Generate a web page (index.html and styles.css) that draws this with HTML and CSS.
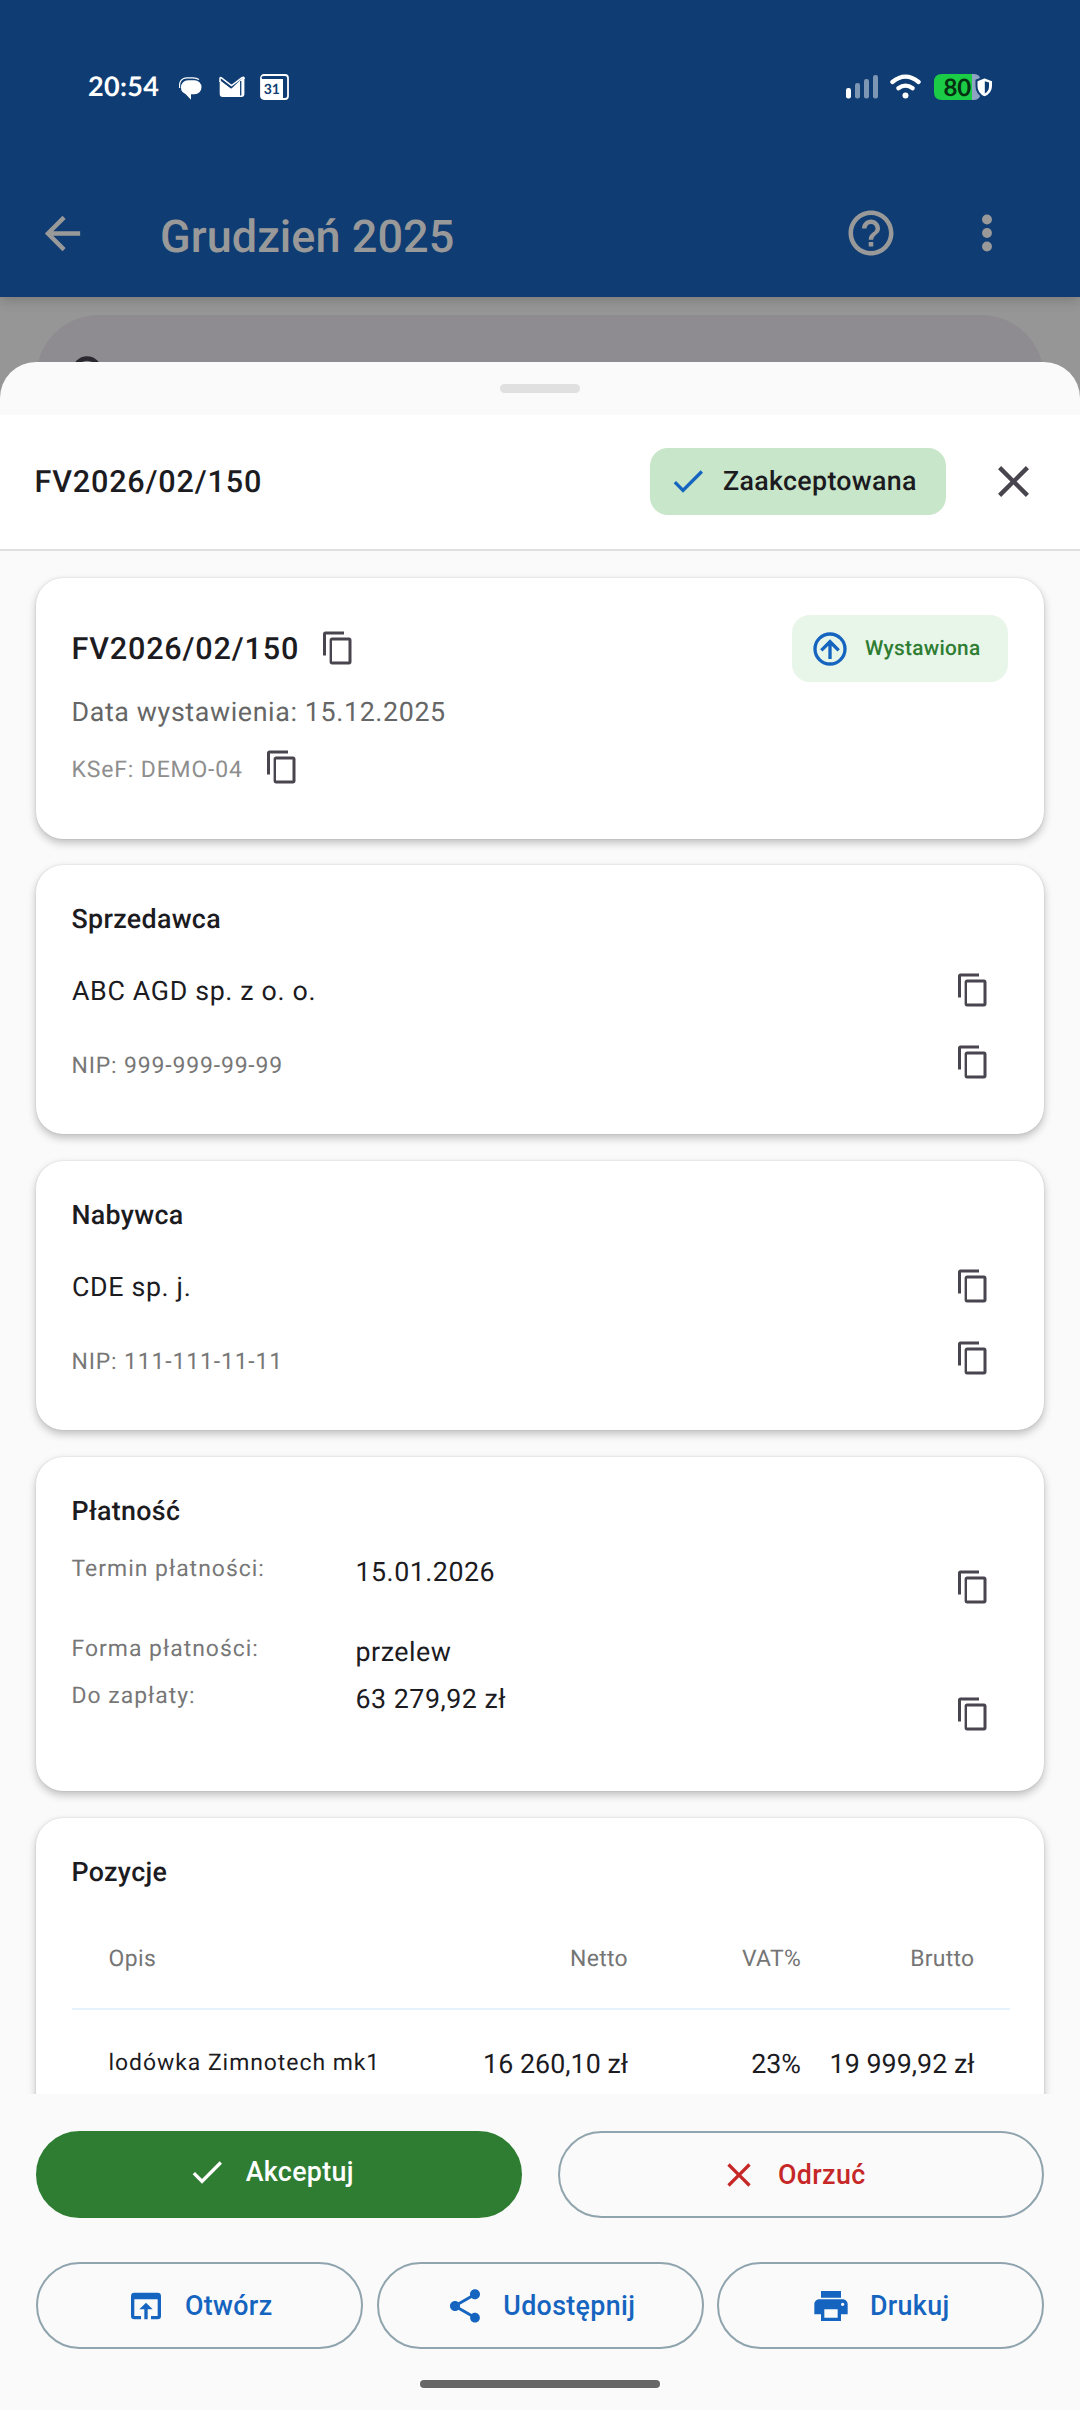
FILE: index.html
```html
<!DOCTYPE html>
<html lang="pl">
<head>
<meta charset="utf-8">
<title>FV2026/02/150</title>
<link rel="stylesheet" href="styles.css">
</head>
<body>
<svg class="defs" aria-hidden="true">
  <symbol id="copy" viewBox="0 0 24 24"><path d="M19 21H8V7h11m0-2H8c-.9 0-1.600.7-1.600 1.600v14.800c0 .9.7 1.600 1.600 1.600h11.400c.9 0 1.600-.7 1.600-1.600V6.600c0-.9-.7-1.600-1.600-1.600M16 1H3.600C2.700 1 2 1.700 2 2.600V17h2V3h12z"/></symbol>
  <symbol id="check" viewBox="0 0 24 24"><path d="M9 16.170 4.830 12l-1.420 1.410L9 19 21 7l-1.410-1.410z"/></symbol>
  <symbol id="close" viewBox="0 0 24 24"><path d="M19 6.410 17.590 5 12 10.590 6.410 5 5 6.410 10.590 12 5 17.590 6.410 19 12 13.410 17.590 19 19 17.590 13.410 12z"/></symbol>
</svg>
<div class="screen">
  <header class="top">
    <div class="status">
      <span class="clock">20:54</span>
      <svg class="ic-chat" viewBox="0 0 23 23"><path fill="#fff" d="M9 3.300h6.500a7 7 0 0 1 0 14H12V22.800L6.500 17A7 7 0 0 1 2 10.300a7 7 0 0 1 7-7z"/><path fill="none" stroke="#fff" stroke-width="1.200" d="M.7 11C-.3 4.500 3 .8 8 .8h6c2.500 0 4.500.6 6 1.700"/></svg>
      <svg class="ic-mail" viewBox="0 0 26 22"><path fill="#fff" d="M.7 4 12.500 12.500 23 2.500Q25.400.5 25.400 3.500V18q0 3-3 3H3.700q-3 0-3-3z"/><path fill="none" stroke="#fff" stroke-width="1.500" d="M1 6V2.600Q1 1 2.500 1.800L12.500 9.500 23 1.700Q25.200.5 25.200 3"/><path stroke="#0f3d73" stroke-width="1.300" d="M21.700 5v14.500M3 4.800l9.300 7.300"/></svg>
      <svg class="ic-cal" viewBox="0 0 29 26"><rect x="1" y="1" width="27" height="24" rx="3" fill="none" stroke="#fff" stroke-width="1.800"/><path fill="#fff" d="M1 5h22v20H4q-3 0-3-3z"/><path fill="none" stroke="#0f3d73" stroke-width="1.300" d="M2 4q0-1.200 1.500-1.200"/><text x="11.800" y="20.300" text-anchor="middle" class="cal-day">31</text></svg>
      <svg class="ic-signal" viewBox="0 0 32 25"><rect y="14" width="5" height="10.500" rx="2.200" fill="#fff"/><g fill="#7d96b3"><rect x="9" y="9" width="5" height="15.500" rx="2.200"/><rect x="18" y="5" width="5" height="19.500" rx="2.200"/><rect x="27" y="1" width="5" height="23.500" rx="2.200"/></g></svg>
      <svg class="ic-wifi" viewBox="0 0 31 25"><g fill="none" stroke="#fff" stroke-width="4.200" stroke-linecap="round"><path d="M2.400 8Q15.500-2.600 28.600 8"/><path d="M8.300 14.300q7.200-5.400 14.400 0"/></g><circle cx="15.500" cy="21.500" r="3" fill="#fff"/></svg>
      <svg class="ic-battery" viewBox="0 0 59 26"><path fill="#8fa3c2" d="M38 0h2q6.500 0 6.500 7v12q0 7-6.500 7h-2z"/><path fill="#1bcc46" d="M8 0h30v26H8q-8 0-8-8V8q0-8 8-8z"/><path fill="#fff" stroke="#0f3d73" stroke-width="2" d="M50.500 3.300 59 6.500v5.500q0 8-8.500 11.500-8-3.500-8-11.500V6.500z"/><path fill="#0f3d73" d="M50.800 7.300V19.500q4.200-2.500 4.200-7V8.600z"/><text x="23.300" y="21.500" text-anchor="middle" class="charge">80</text></svg>
    </div>
    <div class="appbar">
      <svg class="back" viewBox="0 0 24 24"><path d="M20 11H7.830l5.590-5.590L12 4l-8 8 8 8 1.410-1.410L7.830 13H20z"/></svg>
      <h1 class="month">Grudzień 2025</h1>
      <svg class="help" viewBox="0 0 24 24"><path d="M11 18h2v-2h-2v2zm1-16C6.480 2 2 6.480 2 12s4.480 10 10 10 10-4.480 10-10S17.520 2 12 2zm0 18c-4.410 0-8-3.590-8-8s3.590-8 8-8 8 3.590 8 8-3.590 8-8 8zm0-14c-2.210 0-4 1.790-4 4h2c0-1.100.9-2 2-2s2 .9 2 2c0 2-3 1.750-3 5h2c0-2.250 3-2.500 3-5 0-2.210-1.790-4-4-4z"/></svg>
      <svg class="more" viewBox="0 0 24 24"><circle cx="12" cy="6" r="2.200"/><circle cx="12" cy="12" r="2.200"/><circle cx="12" cy="18" r="2.200"/></svg>
    </div>
  </header>
  <div class="behind">
    <div class="search"><svg class="search-ic" viewBox="0 0 30 30"><circle cx="15" cy="15" r="12.500" fill="none" stroke="#2b2830" stroke-width="4.500"/></svg></div>
  </div>
  <section class="sheet">
    <div class="grip"><div class="handle"></div></div>
    <div class="sheet-head">
      <h2 class="invoice-no">FV2026/02/150</h2>
      <div class="chip accepted"><svg class="ic40"><use href="#check"/></svg><span>Zaakceptowana</span></div>
      <svg class="dismiss"><use href="#close"/></svg>
    </div>
    <div class="list">
      <article class="card summary">
        <div class="summary-top">
          <div class="invoice-no">FV2026/02/150</div>
          <svg class="copy"><use href="#copy"/></svg>
          <div class="chip issued"><svg class="ic40" viewBox="0 0 24 24"><path d="M13 18v-8l3.500 3.500 1.420-1.420L12 6.160l-5.920 5.920L7.500 13.500 11 10v8h2M12 2a10 10 0 0 1 10 10 10 10 0 0 1-10 10A10 10 0 0 1 2 12 10 10 0 0 1 12 2m0 2a8 8 0 0 0-8 8 8 8 0 0 0 8 8 8 8 0 0 0 8-8 8 8 0 0 0-8-8z"/></svg><span>Wystawiona</span></div>
        </div>
        <div class="date">Data wystawienia: 15.12.2025</div>
        <div class="ksef"><span class="ksef-no">KSeF: DEMO-04</span><svg class="copy"><use href="#copy"/></svg></div>
      </article>
      <article class="card party">
        <h3 class="title">Sprzedawca</h3>
        <div class="line"><span class="name">ABC AGD sp. z o. o.</span><svg class="copy"><use href="#copy"/></svg></div>
        <div class="line"><span class="nip">NIP: 999-999-99-99</span><svg class="copy"><use href="#copy"/></svg></div>
      </article>
      <article class="card party">
        <h3 class="title">Nabywca</h3>
        <div class="line"><span class="name">CDE sp. j.</span><svg class="copy"><use href="#copy"/></svg></div>
        <div class="line"><span class="nip">NIP: 111-111-11-11</span><svg class="copy"><use href="#copy"/></svg></div>
      </article>
      <article class="card payment">
        <h3 class="title">Płatność</h3>
        <div class="terms">
          <div class="term tall"><span class="label">Termin płatności:</span><span class="value">15.01.2026</span><svg class="copy"><use href="#copy"/></svg></div>
          <div class="term"><span class="label">Forma płatności:</span><span class="value">przelew</span></div>
          <div class="term tall"><span class="label">Do zapłaty:</span><span class="value">63 279,92 zł</span><svg class="copy"><use href="#copy"/></svg></div>
        </div>
      </article>
      <article class="card items">
        <h3 class="title">Pozycje</h3>
        <div class="row head"><span>Opis</span><span class="num">Netto</span><span class="num">VAT%</span><span class="num">Brutto</span></div>
        <div class="row"><span class="desc">lodówka Zimnotech mk1</span><span class="num">16 260,10 zł</span><span class="num">23%</span><span class="num">19 999,92 zł</span></div>
      </article>
    </div>
    <footer class="actions">
      <div class="decide">
        <button class="btn primary"><svg class="ic40"><use href="#check"/></svg><span>Akceptuj</span></button>
        <button class="btn reject"><svg class="ic40"><use href="#close"/></svg><span>Odrzuć</span></button>
      </div>
      <div class="tools">
        <button class="btn"><svg class="ic40" viewBox="0 0 24 24"><path d="M19 4H5a2 2 0 0 0-2 2v12a2 2 0 0 0 2 2h4v-2H5V8h14v10h-4v2h4a2 2 0 0 0 2-2V6a2 2 0 0 0-2-2zm-7 6-4 4h3v6h2v-6h3z"/></svg><span>Otwórz</span></button>
        <button class="btn"><svg class="ic40" viewBox="0 0 24 24"><path d="M18 16.080c-.76 0-1.440.3-1.960.77L8.910 12.700c.05-.23.09-.46.09-.7s-.04-.47-.09-.7l7.050-4.110c.54.5 1.250.81 2.040.81 1.660 0 3-1.340 3-3s-1.340-3-3-3-3 1.340-3 3c0 .24.04.47.09.7L8.040 9.810C7.500 9.310 6.790 9 6 9c-1.660 0-3 1.340-3 3s1.340 3 3 3c.79 0 1.500-.31 2.040-.81l7.120 4.160c-.05.21-.08.43-.08.65 0 1.610 1.310 2.920 2.920 2.920s2.920-1.310 2.920-2.920-1.310-2.920-2.920-2.920z"/></svg><span>Udostępnij</span></button>
        <button class="btn"><svg class="ic40" viewBox="0 0 24 24"><path d="M19 8H5c-1.660 0-3 1.340-3 3v6h4v4h12v-4h4v-6c0-1.660-1.340-3-3-3zm-3 11H8v-5h8v5zm3-7c-.55 0-1-.45-1-1s.45-1 1-1 1 .45 1 1-.45 1-1 1zm-1-9H6v4h12V3z"/></svg><span>Drukuj</span></button>
      </div>
      <div class="home"></div>
    </footer>
  </section>
</div>
</body>
</html>
```
FILE: styles.css
```css
* { box-sizing: border-box; }
body { margin: 0; font-family: Roboto, "Liberation Sans", sans-serif; color: #1c1b1f; background: #fafafa; text-rendering: geometricPrecision; }
h1, h2, h3 { margin: 0; font-weight: 500; }
svg { flex: none; fill: currentColor; }
span { white-space: nowrap; }
.defs { display: none; }
.screen { width: 1080px; height: 2410px; overflow: hidden; background: #969696; }

/* status bar and app bar */
.top { position: relative; height: 297px; padding-top: 64px; background: #0f3d73; box-shadow: 0 2px 12px rgba(0, 0, 0, .22); }
.status { display: flex; align-items: center; height: 45px; padding-left: 88px; }
.clock { width: 91px; padding-bottom: 2px; font: 700 27px/43px Lato, sans-serif; letter-spacing: .3px; color: #fff; }
.ic-chat { width: 23px; height: 23px; margin-top: 3px; }
.ic-mail { width: 26px; height: 22px; margin-left: 17px; }
.ic-cal { width: 29px; height: 26px; margin-left: 15px; }
.cal-day { font: 700 14px Lato, sans-serif; fill: #0f3d73; }
.ic-signal { width: 32px; height: 25px; margin-left: auto; }
.ic-wifi { width: 31px; height: 25px; margin-left: 12px; }
.ic-battery { width: 59px; height: 26px; margin: 0 87px 0 13px; overflow: visible; }
.charge { font: 700 24px Lato, sans-serif; fill: #053012; }
.appbar { display: flex; align-items: center; height: 54px; margin-top: 97px; padding: 0 66px 0 36px; color: #999; }
.back { width: 53px; height: 53px; }
.month { margin-left: 71px; padding-top: 7px; font-size: 45px; line-height: 54px; letter-spacing: .05px; }
.help { width: 54px; height: 54px; margin: 0 62px 1px auto; }
.more { width: 54px; height: 54px; margin-bottom: 1px; }
.behind { height: 65px; padding: 18px 36px 0; }
.search { height: 126px; padding: 41px 0 0 36px; border-radius: 63px; background: #8e8b91; }
.search-ic { display: block; width: 30px; height: 30px; }

/* bottom sheet */
.sheet { position: relative; border-radius: 36px 36px 0 0; background: #fafafa; overflow: hidden; }
.grip { height: 53px; padding-top: 22px; }
.handle { width: 80px; height: 9px; margin: 0 auto; border-radius: 5px; background: #e0e0e0; }
.sheet-head { display: flex; align-items: center; height: 136px; padding: 0 40px 2px 34.500px; background: #fff; border-bottom: 2px solid #e0e0e0; }
.invoice-no { padding-top: 3px; font-size: 30.6px; font-weight: 500; line-height: 40px; letter-spacing: .82px; }
.chip { display: flex; align-items: center; height: 67px; margin-left: auto; border-radius: 18px; font-weight: 500; line-height: 36px; }
.chip .ic40 { color: #1565c0; }
.accepted { width: 296px; padding-left: 18px; gap: 15px; background: #c8e6c9; font-size: 26.8px; letter-spacing: .32px; }
.issued { width: 216px; padding-left: 18px; gap: 15px; background: #e8f5e9; color: #2e7d32; font-size: 20.8px; letter-spacing: .28px; }
.dismiss { width: 53px; height: 53px; margin-left: 41px; color: #49454f; }
.ic40 { width: 40px; height: 40px; }
.copy { width: 36px; height: 36px; margin-bottom: 1px; color: #49454f; }

/* scrolling cards */
.list { display: flex; flex-direction: column; gap: 27px; height: 1543px; padding: 27px 36px 0; overflow: hidden; }
.card { flex: none; padding: 36px 36px 0 35.500px; border-radius: 27px; background: #fff; box-shadow: 0 4px 9px rgba(0, 0, 0, .24), 0 0 2px rgba(0, 0, 0, .14); }
.title { font-size: 26.8px; line-height: 36px; letter-spacing: .32px; }
.summary { height: 261px; margin-bottom: -1px; padding-top: 37px; }
.summary-top { display: flex; align-items: center; }
.summary-top .invoice-no { width: 248.500px; }
.date { margin-top: 10px; font-size: 26.8px; line-height: 40px; letter-spacing: .63px; color: #666; }
.ksef { display: flex; align-items: center; height: 36px; margin-top: 17px; }
.ksef-no { width: 192.500px; padding-top: 4px; font-size: 22.95px; letter-spacing: .86px; color: #8e8e8e; }
.party { height: 269px; }
.party .title { margin-bottom: 18px; }
.line { display: flex; align-items: center; justify-content: space-between; height: 72px; padding-right: 17px; }
.line .copy, .term .copy { margin-bottom: 2px; }
.name { padding-left: .5px; font-size: 26.8px; letter-spacing: .64px; }
.nip { padding-top: 4px; font-size: 22.95px; letter-spacing: .85px; color: #777; }
.payment { height: 334px; }
.terms { display: flex; flex-direction: column; gap: 8px; margin-top: 23px; }
.term { display: flex; height: 39px; padding-right: 17px; }
.tall { height: 72px; }
.label { width: 284px; font-size: 22.95px; line-height: 34px; letter-spacing: 1px; color: #777; }
.value { font-size: 26.8px; line-height: 41px; letter-spacing: .5px; }
.term .copy { align-self: center; margin-left: auto; }
.items { height: 420px; }
.row { display: grid; grid-template-columns: 300px 219.500px 173px 173.500px; align-items: center; width: 938px; height: 106px; padding-left: 37px; }
.row .num { padding-top: 2px; text-align: right; font-size: 26.8px; letter-spacing: .03px; }
.row.head { height: 101px; margin-top: 19px; border-bottom: 2px solid #e3f2fd; color: #757575; font-size: 22.95px; letter-spacing: .4px; }
.row.head .num { padding: 0; font-size: 22.95px; letter-spacing: .3px; }
.desc { padding-bottom: 1px; font-size: 22.95px; letter-spacing: .96px; }

/* actions */
.actions { height: 316px; padding: 37px 36px 0; }
.decide { display: grid; grid-template-columns: 1fr 1fr; gap: 36px; }
.tools { display: grid; grid-template-columns: repeat(3, 1fr); gap: 13.500px; margin-top: 44px; }
.btn { display: flex; align-items: center; justify-content: center; gap: 18.500px; height: 87px; padding: 0; border: 2px solid #90a4ae; border-radius: 44px; background: none; color: #1565c0; font: 500 26.8px/36px Roboto, sans-serif; letter-spacing: .35px; }
.decide .btn { padding-right: 17px; }
.primary { padding-bottom: 5px; border-color: #2e7d32; background: #2e7d32; color: #fff; }
.reject { color: #c62828; }
.home { width: 240px; height: 8px; margin: 31px auto 0; border-radius: 4px; background: #666; }
```
